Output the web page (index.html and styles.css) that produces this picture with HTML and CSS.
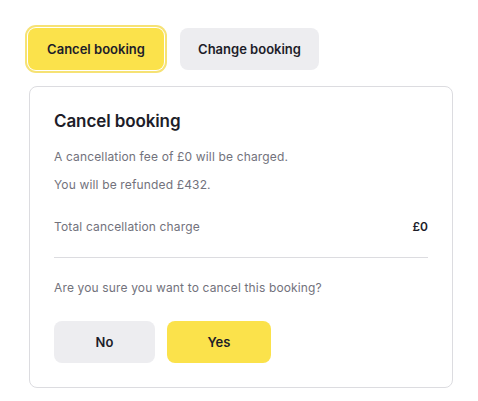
FILE: index.html
```html
<!DOCTYPE html>
<html lang="en">
<head>
<meta charset="utf-8">
<link rel="stylesheet" href="styles.css">
</head>
<body>
<div class="page">
  <div class="tabs">
    <button class="btn btn-yellow btn-focus tab">Cancel booking</button>
    <button class="btn btn-gray tab">Change booking</button>
  </div>
  <div class="card">
    <h2 class="title">Cancel booking</h2>
    <p class="text">A cancellation fee of £0 will be charged.</p>
    <p class="text">You will be refunded £432.</p>
    <div class="total">
      <span class="text">Total cancellation charge</span>
      <span class="amount">£0</span>
    </div>
    <hr class="divider">
    <p class="text">Are you sure you want to cancel this booking?</p>
    <div class="actions">
      <button class="btn btn-gray act-no">No</button>
      <button class="btn btn-yellow act-yes">Yes</button>
    </div>
  </div>
</div>
</body>
</html>
```
FILE: styles.css
```css
* { box-sizing: border-box; }
body {
  margin: 0;
  background: #fff;
  font-family: Inter, "Noto Sans", sans-serif;
  color: #1d1d29;
}
.page {
  padding: 28px 25px 0 29px;
  width: 478px;
}
.tabs {
  display: flex;
  gap: 16px;
  margin-left: -1px;
}
.btn {
  border: none;
  border-radius: 8px;
  height: 42px;
  font-family: inherit;
  font-size: 13px;
  font-weight: 600;
  color: #1d1d29;
  padding: 0;
  cursor: pointer;
}
.btn-yellow { background: #fbe24b; }
.btn-gray { background: #ededf0; }
.btn-focus {
  box-shadow: 0 0 0 1px #fff, 0 0 0 3px #f6e274;
}
.tab { width: 136px; }
.tab + .tab { width: 139px; }
.card {
  margin-top: 16px;
  border: 1px solid #dcdce0;
  border-radius: 8px;
  padding: 22px 24px 24px 24px;
  width: 424px;
}
.title {
  margin: 0 0 16px 0;
  font-size: 17px;
  font-weight: 600;
  line-height: 24px;
  letter-spacing: -0.1px;
}
.text {
  margin: 0;
  font-size: 12px;
  line-height: 16px;
  letter-spacing: 0.15px;
  color: #72727c;
}
.title + .text { margin-bottom: 12px; }
.total {
  display: flex;
  justify-content: space-between;
  align-items: center;
  margin-top: 26px;
}
.amount {
  font-size: 12px;
  font-weight: 600;
  line-height: 16px;
}
.divider {
  border: none;
  border-top: 1px solid #dcdce0;
  margin: 22px 0 22px 0;
}
.actions {
  display: flex;
  gap: 12px;
  margin-top: 25px;
}
.act-no { width: 101px; }
.act-yes { width: 104px; }
```
